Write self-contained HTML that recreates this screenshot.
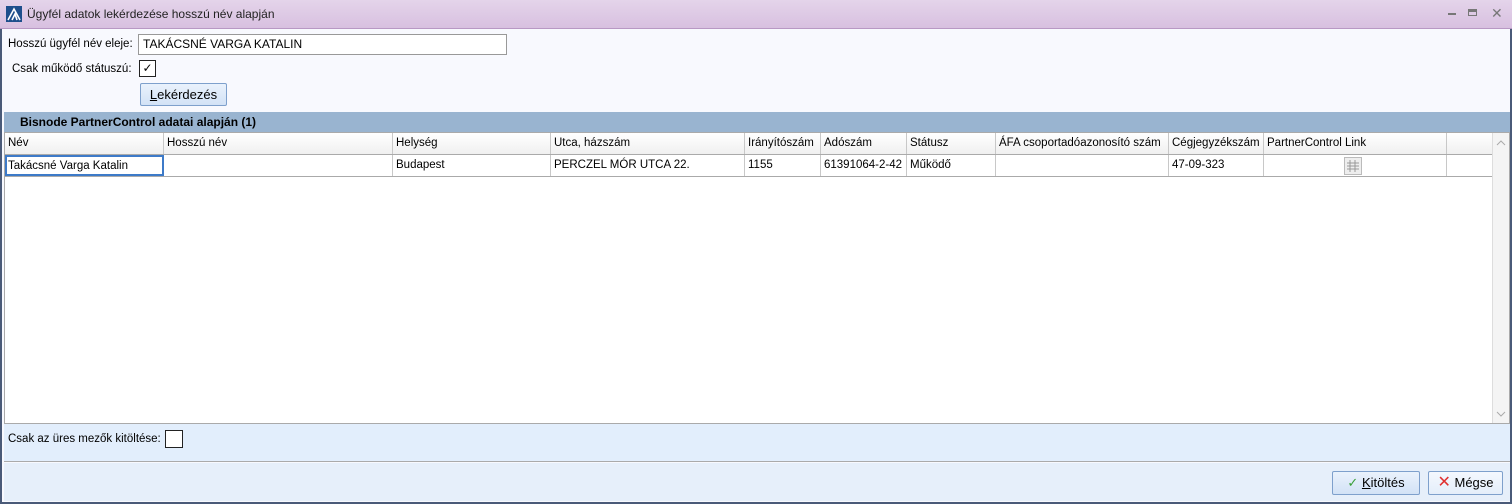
<!DOCTYPE html>
<html><head><meta charset="utf-8"><style>
*{margin:0;padding:0;box-sizing:border-box}
body{width:1512px;height:504px;overflow:hidden;background:#4a5a78;font-family:"Liberation Sans",sans-serif;font-size:12px;color:#000;position:relative}
.a{position:absolute}
.title{left:0;top:0;width:1512px;height:29px;background:linear-gradient(#e4d4ea,#d8c0e0);border-bottom:1px solid #b898c4}
.win{left:2px;top:29px;width:1508px;height:473px;background:#f8f9fe}
.col{position:absolute;top:0;height:100%;border-right:1px solid #c8c8c8;padding-left:3px;line-height:21px;white-space:nowrap;overflow:hidden;font-size:11.5px}
.btn{border:1px solid #7ea0cc;background:linear-gradient(#eaf2fc,#d2e2f6);border-radius:2px;text-align:center;line-height:22px;font-size:13px}
</style></head><body>
<div class="a title"></div>
<svg class="a" style="left:6px;top:6px" width="16" height="16"><rect width="16" height="16" fill="#1e4f8c"/><path d="M2 14 L8 3 L14 14 M6 14 L9 8 L11 14" stroke="#fff" stroke-width="1.6" fill="none"/></svg>
<div class="a" style="left:27px;top:7px;font-size:12px;color:#222">Ügyfél adatok lekérdezése hosszú név alapján</div>
<div class="a" style="left:1448px;top:13px;width:8px;height:2px;background:#777"></div>
<div class="a" style="left:1468px;top:9px;width:9px;height:7px;border:1px solid #777;border-top:3px solid #777"></div>
<div class="a" style="left:1491px;top:5px;font-size:14px;color:#777">✕</div>
<div class="a win"></div>
<div class="a" style="left:8px;top:38px;font-size:11.5px">Hosszú ügyfél név eleje:</div>
<div class="a" style="left:138px;top:34px;width:369px;height:21px;border:1px solid #999;background:#fff;padding-left:4px;line-height:19px">TAKÁCSNÉ VARGA KATALIN</div>
<div class="a" style="left:12px;top:63px;font-size:11.5px">Csak működő státuszú:</div>
<div class="a" style="left:139px;top:60px;width:17px;height:17px;border:1px solid #222;background:#fff;text-align:center;line-height:15px;font-size:12px">✓</div>
<div class="a btn" style="left:140px;top:83px;width:87px;height:23px"><u>L</u>ekérdezés</div>
<div class="a" style="left:4px;top:112px;width:1506px;height:20px;background:#99b4d0;font-weight:bold;padding-left:16px;line-height:21px">Bisnode PartnerControl adatai alapján (1)</div>
<div class="a" style="left:4px;top:132px;width:1506px;height:292px;background:#fff;border:1px solid #aaa"></div>
<div class="a" style="left:5px;top:133px;width:1487px;height:22px;background:linear-gradient(#fff,#f0f0f0);border-bottom:1px solid #aaa">
<div class="col" style="left:0;width:159px">Név</div><div class="col" style="left:159px;width:229px">Hosszú név</div><div class="col" style="left:388px;width:158px">Helység</div><div class="col" style="left:546px;width:194px">Utca, házszám</div><div class="col" style="left:740px;width:76px">Irányítószám</div><div class="col" style="left:816px;width:86px">Adószám</div><div class="col" style="left:902px;width:89px">Státusz</div><div class="col" style="left:991px;width:173px">ÁFA csoportadóazonosító szám</div><div class="col" style="left:1164px;width:95px">Cégjegyzékszám</div><div class="col" style="left:1259px;width:183px">PartnerControl Link</div></div>
<div class="a" style="left:5px;top:155px;width:1487px;height:22px;border-bottom:1px solid #aaa">
<div class="col" style="left:0;width:159px;border:2px solid #3d7ac8;line-height:18px;padding-left:1px">Takácsné Varga Katalin</div><div class="col" style="left:159px;width:229px"></div><div class="col" style="left:388px;width:158px">Budapest</div><div class="col" style="left:546px;width:194px">PERCZEL MÓR UTCA 22.</div><div class="col" style="left:740px;width:76px">1155</div><div class="col" style="left:816px;width:86px">61391064-2-42</div><div class="col" style="left:902px;width:89px">Működő</div><div class="col" style="left:991px;width:173px"></div><div class="col" style="left:1164px;width:95px">47-09-323</div><div class="col" style="left:1259px;width:183px"></div></div>
<svg class="a" style="left:1344px;top:157px" width="18" height="18"><rect x=".5" y=".5" width="17" height="17" fill="#eee" stroke="#bbb"/><path d="M6 3v12M11 3v12M3 6h12M3 9h12M3 12h12" stroke="#999"/></svg>
<div class="a" style="left:1492px;top:133px;width:17px;height:290px;background:#f4f4f4;border-left:1px solid #ddd"></div>
<svg class="a" style="left:1496px;top:140px" width="10" height="6"><path d="M1 5 L5 1 L9 5" stroke="#aaa" fill="none"/></svg>
<svg class="a" style="left:1496px;top:411px" width="10" height="6"><path d="M1 1 L5 5 L9 1" stroke="#aaa" fill="none"/></svg>
<div class="a" style="left:4px;top:424px;width:1506px;height:38px;background:#e2eefc;border-bottom:1px solid #aaa"></div>
<div class="a" style="left:8px;top:433px;font-size:11.5px">Csak az üres mezők kitöltése:</div>
<div class="a" style="left:165px;top:430px;width:18px;height:18px;border:1px solid #222;background:#fff"></div>
<div class="a" style="left:4px;top:463px;width:1506px;height:38px;background:#e6effa"></div>
<div class="a btn" style="left:1332px;top:471px;width:88px;height:24px"><span style="color:#3aa03a">✓</span> <u>K</u>itöltés</div>
<div class="a btn" style="left:1428px;top:471px;width:75px;height:24px;background:linear-gradient(#f4f8fe,#e4eefa)"><span style="color:#e03030;font-size:16px">✕</span> Mégse</div>
</body></html>
